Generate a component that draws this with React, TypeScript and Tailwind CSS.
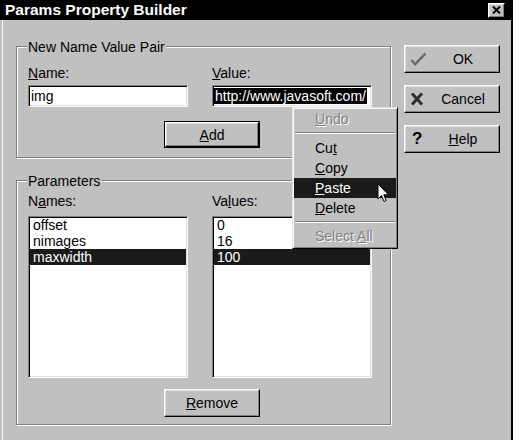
import React from "react";

const raised =
  "border border-t-white border-l-white border-r-black border-b-black shadow-[inset_-1px_-1px_0_#808080,inset_1px_1px_0_#dfdfdf]";
const sunken =
  "border border-t-[#808080] border-l-[#808080] border-r-white border-b-white shadow-[inset_1px_1px_0_#000,inset_-1px_-1px_0_#dfdfdf]";
const etched =
  "border border-[#808080] shadow-[inset_1px_1px_0_#fff,1px_1px_0_#fff]";

function GroupLabel({ children }: { children: React.ReactNode }) {
  return (
    <div className="absolute left-[10px] -top-[8px] bg-[#c0c0c0] px-px leading-[16px]">
      {children}
    </div>
  );
}

function ListBox({ items }: { items: string[] }) {
  return (
    <div className={`mt-[7px] h-[162px] w-[160px] bg-white ${sunken} px-px`}>
      {items.map((it, i) => (
        <div
          key={it}
          className={`h-[16px] pl-[3px] leading-[16px] ${
            i === 2 ? "bg-[#1a1a1a] text-white" : ""
          }`}
        >
          {it}
        </div>
      ))}
    </div>
  );
}

function SideButton({
  icon,
  children,
}: {
  icon: React.ReactNode;
  children: React.ReactNode;
}) {
  return (
    <div className={`flex h-[28px] w-[96px] items-center bg-[#c0c0c0] ${raised}`}>
      <div className="flex w-[22px] items-center pl-[5px]">{icon}</div>
      <div className="flex-1 text-center">{children}</div>
    </div>
  );
}

function MenuItem({
  children,
  active,
  disabled,
}: {
  children: React.ReactNode;
  active?: boolean;
  disabled?: boolean;
}) {
  return (
    <div
      className={`flex h-[20px] items-center pl-[21px] ${
        active ? "bg-[#1a1a1a] text-white" : ""
      } ${disabled ? "text-[#808080] [text-shadow:1px_1px_0_#fff]" : ""}`}
    >
      {children}
    </div>
  );
}

function Sep({ pb }: { pb: string }) {
  return (
    <div className={`pt-[3px] ${pb} px-px`}>
      <div className="h-0 border-t border-b border-t-[#808080] border-b-white" />
    </div>
  );
}

export default function App() {
  return (
    <div className="h-[440px] w-[520px] bg-white font-['Liberation_Sans',Arial,sans-serif] text-[14px] leading-[16px] text-black">
      <div className="relative h-[440px] w-[513px] border-r-2 border-black bg-[#c0c0c0]">
        {/* Title bar */}
        <div className="flex h-[20px] items-center justify-between bg-black pl-[5px]">
          <span className="text-[15.5px] font-bold leading-[20px] text-white">
            Params Property Builder
          </span>
          <div
            className={`mr-[6px] flex h-[15px] w-[17px] items-center justify-center bg-[#c0c0c0] ${raised}`}
          >
            <svg width="9" height="8" viewBox="0 0 9 8">
              <path d="M1 0.5 L8 7.5 M8 0.5 L1 7.5" stroke="#000" strokeWidth="2" />
            </svg>
          </div>
        </div>

        {/* Body */}
        <div className="ml-[2px] flex h-[420px] items-start border-l border-white pl-[13px] pt-[26px]">
          {/* Left column */}
          <div className="w-[375px]">
            {/* Group 1 */}
            <div className={`relative h-[112px] ${etched}`}>
              <GroupLabel>New Name Value Pair</GroupLabel>
              <div className="pl-[11px] pt-[18px]">
                <div className="flex gap-[24px]">
                  <div className="w-[160px]">
                    <div>
                      <u>N</u>ame:
                    </div>
                    <div className={`mt-[4px] h-[22px] bg-white pl-[2px] pt-[2px] ${sunken}`}>
                      img
                    </div>
                  </div>
                  <div className="w-[160px]">
                    <div>
                      <u>V</u>alue:
                    </div>
                    <div
                      className={`mt-[4px] h-[22px] overflow-hidden whitespace-nowrap bg-white pl-px pt-[2px] ${sunken}`}
                    >
                      <span className="bg-black px-px text-white">
                        http://www.javasoft.com/
                      </span>
                    </div>
                  </div>
                </div>
                <div className="ml-[136px] mt-[14px] h-[27px] w-[96px] border border-black">
                  <div
                    className={`flex h-full w-full items-center justify-center ${raised}`}
                  >
                    <span>
                      <u>A</u>dd
                    </span>
                  </div>
                </div>
              </div>
            </div>

            {/* Group 2 */}
            <div className={`relative mt-[22px] h-[245px] ${etched}`}>
              <GroupLabel>Parameters</GroupLabel>
              <div className="pl-[11px] pt-[12px]">
                <div className="flex gap-[24px]">
                  <div className="w-[160px]">
                    <div>
                      N<u>a</u>mes:
                    </div>
                    <ListBox items={["offset", "nimages", "maxwidth"]} />
                  </div>
                  <div className="w-[160px]">
                    <div>
                      Va<u>l</u>ues:
                    </div>
                    <ListBox items={["0", "16", "100"]} />
                  </div>
                </div>
                <div
                  className={`ml-[136px] mt-[11px] flex h-[28px] w-[96px] items-center justify-center ${raised}`}
                >
                  <span>
                    <u>R</u>emove
                  </span>
                </div>
              </div>
            </div>
          </div>

          {/* Right column */}
          <div className="-mt-px ml-[13px] flex flex-col gap-[12px]">
            <SideButton
              icon={
                <svg width="18" height="16" viewBox="0 0 18 16">
                  <path
                    d="M1.5 9 L5.5 13.5 L16.5 2"
                    fill="none"
                    stroke="#6a6a6a"
                    strokeWidth="2.6"
                  />
                </svg>
              }
            >
              OK
            </SideButton>
            <SideButton
              icon={
                <svg width="14" height="14" viewBox="0 0 14 14">
                  <path
                    d="M2 1.5 L12 12.5 M12 1.5 L2 12.5"
                    stroke="#2e2e2e"
                    strokeWidth="3"
                  />
                </svg>
              }
            >
              Cancel
            </SideButton>
            <SideButton
              icon={<span className="pl-[2px] text-[17px] font-bold leading-[16px]">?</span>}
            >
              <u>H</u>elp
            </SideButton>
          </div>
        </div>

        {/* Context menu */}
        <div
          className={`absolute left-[292px] top-[107px] h-[142px] w-[106px] bg-[#c0c0c0] border border-t-[#dfdfdf] border-l-[#dfdfdf] border-r-black border-b-black shadow-[inset_1px_1px_0_#fff,inset_-1px_-1px_0_#808080] p-px`}
        >
          <MenuItem disabled>
            <span>
              <u>U</u>ndo
            </span>
          </MenuItem>
          <Sep pb="pb-[4px]" />
          <MenuItem>
            <span>
              Cu<u>t</u>
            </span>
          </MenuItem>
          <MenuItem>
            <span>
              <u>C</u>opy
            </span>
          </MenuItem>
          <MenuItem active>
            <span>
              <u>P</u>aste
            </span>
          </MenuItem>
          <MenuItem>
            <span>
              <u>D</u>elete
            </span>
          </MenuItem>
          <Sep pb="pb-[3px]" />
          <MenuItem disabled>
            <span>
              Select <u>A</u>ll
            </span>
          </MenuItem>
        </div>

        {/* Mouse cursor */}
        <svg
          className="absolute left-[377px] top-[183px]"
          width="13"
          height="21"
          viewBox="0 0 13 21"
        >
          <path
            d="M1 1 V16 L4.5 12.5 L7 18.5 L9.2 17.5 L6.8 11.8 H11.5 Z"
            fill="#fff"
            stroke="#000"
            strokeWidth="1"
          />
        </svg>
      </div>
    </div>
  );
}
